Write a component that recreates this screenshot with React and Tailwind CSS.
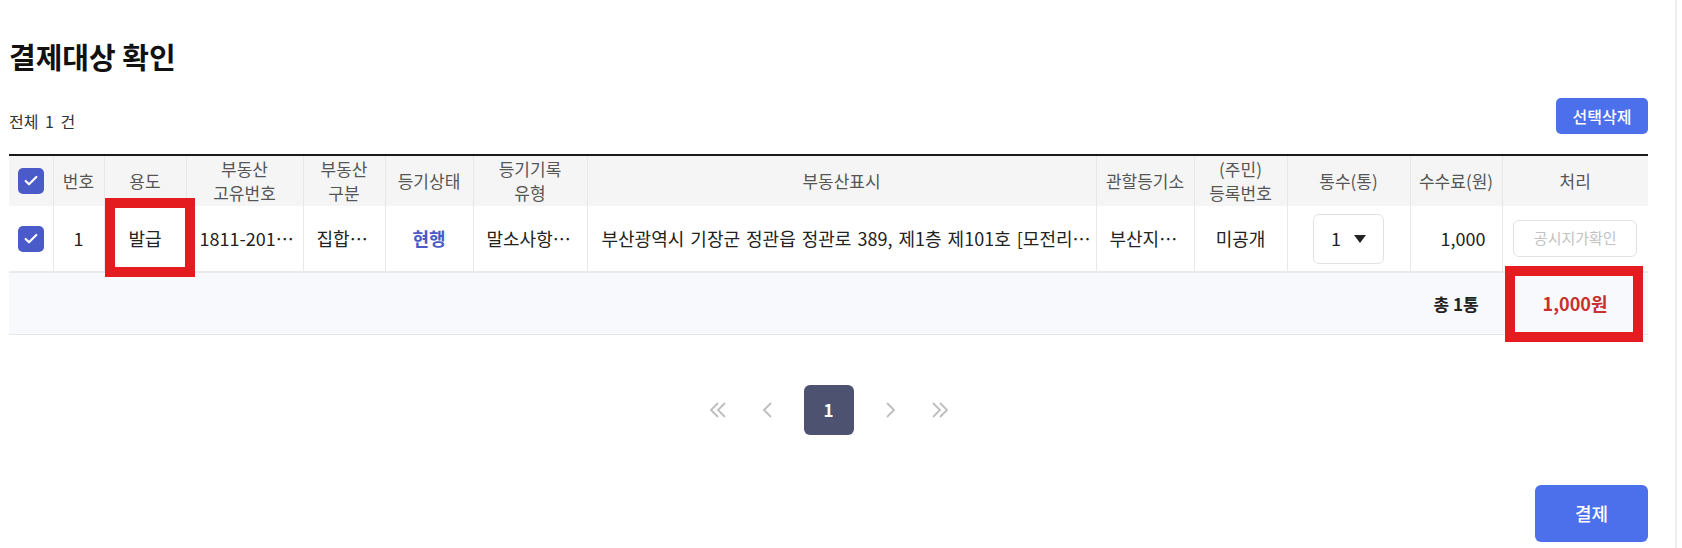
import React from 'react';
import { Check } from 'lucide-react';

const columns = [
    { key: 'check', width: 44 },
    { key: 'no', width: 51, label: ['번호'] },
    { key: 'use', width: 82, label: ['용도'] },
    { key: 'uid', width: 117, label: ['부동산', '고유번호'] },
    { key: 'type', width: 82, label: ['부동산', '구분'] },
    { key: 'state', width: 88, label: ['등기상태'] },
    { key: 'record', width: 114, label: ['등기기록', '유형'] },
    { key: 'addr', width: 509, label: ['부동산표시'] },
    { key: 'office', width: 98, label: ['관할등기소'] },
    { key: 'reg', width: 93, label: ['(주민)', '등록번호'] },
    { key: 'count', width: 123, label: ['통수(통)'] },
    { key: 'fee', width: 92, label: ['수수료(원)'] },
    { key: 'action', width: 146, label: ['처리'] },
];

function CheckBox() {
    return (
        <span className="inline-flex w-[26px] h-[26px] rounded-[5px] bg-[#4a5bc9] items-center justify-center">
            <Check className="w-[16px] h-[16px] text-white" strokeWidth={3.2} />
        </span>
    );
}

function Chevron({ double, right }) {
    return (
        <svg width={double ? 20 : 12} height="18" viewBox={double ? '0 0 20 18' : '0 0 12 18'} fill="none" stroke="#bdbdbd" strokeWidth="1.8" className={right ? 'rotate-180' : ''}>
            {double ? (
                <>
                    <path d="M10 2 L3 9 L10 16" />
                    <path d="M17 2 L10 9 L17 16" />
                </>
            ) : (
                <path d="M9 2 L2 9 L9 16" />
            )}
        </svg>
    );
}

// red annotation boxes drawn over the table
function RedMark({ className }) {
    return <div className={`absolute border-[10px] border-[#e41c1f] pointer-events-none ${className}`} />;
}

export default function App() {
    return (
        <div className="w-full h-[548px] bg-white font-['Noto_Sans_CJK_KR','Noto_Sans',sans-serif] overflow-hidden">
            <div className="w-[1677px] h-[548px] border-r-2 border-[#ececec] pl-[9px] pr-[27px] pt-[36px]">
                {/* Title */}
                <h2 className="text-[29px] leading-[40px] font-bold text-[#111]">결제대상 확인</h2>

                <div className="flex items-end justify-between mt-[22px]">
                    <span className="text-[16px] leading-[24px] text-[#333] mb-[1px] [word-spacing:3px]">전체 1 건</span>
                    <button className="w-[92px] h-[36px] rounded-[5px] bg-[#4c6fec] text-white text-[16px] font-medium">
                        선택삭제
                    </button>
                </div>

                {/* Table */}
                <table className="w-full table-fixed border-collapse mt-[20px] border-t-2 border-[#1a1a1a]">
                    <colgroup>
                        {columns.map((c) => (
                            <col key={c.key} style={{ width: c.width }} />
                        ))}
                    </colgroup>
                    <thead>
                        <tr className="h-[51px] bg-[#f5f5f5]">
                            {columns.map((c, i) => (
                                <th
                                    key={c.key}
                                    className={`p-0 font-normal text-[17px] leading-[24px] text-[#555] text-center ${i > 0 ? 'border-l border-[#e8e8e8]' : ''}`}
                                >
                                    {c.key === 'check' ? (
                                        <div className="flex justify-center">
                                            <CheckBox />
                                        </div>
                                    ) : (
                                        c.label.map((l) => <div key={l}>{l}</div>)
                                    )}
                                </th>
                            ))}
                        </tr>
                    </thead>
                    <tbody className="text-[18px] text-[#222]">
                        <tr className="h-[66px] border-b-2 border-[#e9eaee]">
                            <td className="text-center">
                                <div className="flex justify-center">
                                    <CheckBox />
                                </div>
                            </td>
                            <td className="text-center border-l border-[#e8e8e8]">1</td>
                            <td className="relative text-center border-l border-[#e8e8e8]">
                                발급
                                <RedMark className="left-0 top-[-8px] w-[90px] h-[79px]" />
                            </td>
                            <td className="border-l border-[#e8e8e8] pl-[13px] pr-[6px] truncate text-center">1811-2012-002345</td>
                            <td className="border-l border-[#e8e8e8] px-[13px] truncate text-center">집합건물</td>
                            <td className="border-l border-[#e8e8e8] text-center font-semibold text-[#4a5bc4]">현행</td>
                            <td className="border-l border-[#e8e8e8] px-[13px] truncate text-center">말소사항포함</td>
                            <td className="border-l border-[#e8e8e8] pl-[14px] pr-[2px] truncate text-center [word-spacing:2px]">
                                부산광역시 기장군 정관읍 정관로 389, 제1층 제101호 [모전리산지번]
                            </td>
                            <td className="border-l border-[#e8e8e8] px-[13px] truncate text-center">부산지방법원 동부지원</td>
                            <td className="border-l border-[#e8e8e8] text-center">미공개</td>
                            <td className="border-l border-[#e8e8e8]">
                                <div className="mx-auto w-[71px] h-[50px] rounded-[6px] border border-[#e2e2e2] flex items-center justify-center gap-[13px]">
                                    <span>1</span>
                                    <span className="w-0 h-0 border-l-[6px] border-r-[6px] border-t-[8px] border-l-transparent border-r-transparent border-t-[#222]" />
                                </div>
                            </td>
                            <td className="border-l border-[#e8e8e8] text-right pr-[16px]">1,000</td>
                            <td className="border-l border-[#e8e8e8]">
                                <button className="mx-auto block w-[124px] h-[37px] rounded-[6px] border border-[#e2e2e2] text-[15px] text-[#c2c2c2]">
                                    공시지가확인
                                </button>
                            </td>
                        </tr>
                        <tr className="h-[62px] bg-[#f8f9fc] border-b border-[#e6e6e6]">
                            <td colSpan={11} />
                            <td className="text-center text-[17px] font-bold text-[#222]">총 1통</td>
                            <td className="relative text-center text-[18px] font-bold text-[#c8302d]">
                                1,000원
                                <RedMark className="left-[3px] top-[-7px] w-[138px] h-[76px]" />
                            </td>
                        </tr>
                    </tbody>
                </table>

                {/* Pagination */}
                <div className="flex justify-center items-center mt-[50px] h-[50px]">
                    <button className="w-[50px] h-[50px] flex items-center justify-center">
                        <Chevron double />
                    </button>
                    <button className="w-[50px] h-[50px] flex items-center justify-center">
                        <Chevron />
                    </button>
                    <span className="mx-[11px] w-[50px] h-[50px] rounded-[6px] bg-[#4d5270] text-white text-[17px] font-bold flex items-center justify-center">
                        1
                    </span>
                    <button className="w-[50px] h-[50px] flex items-center justify-center">
                        <Chevron right />
                    </button>
                    <button className="w-[50px] h-[50px] flex items-center justify-center">
                        <Chevron double right />
                    </button>
                </div>

                <div className="flex justify-end mt-[50px]">
                    <button className="w-[113px] h-[57px] rounded-[6px] bg-[#4c6fec] text-white text-[18px] font-medium">
                        결제
                    </button>
                </div>
            </div>
        </div>
    );
}
